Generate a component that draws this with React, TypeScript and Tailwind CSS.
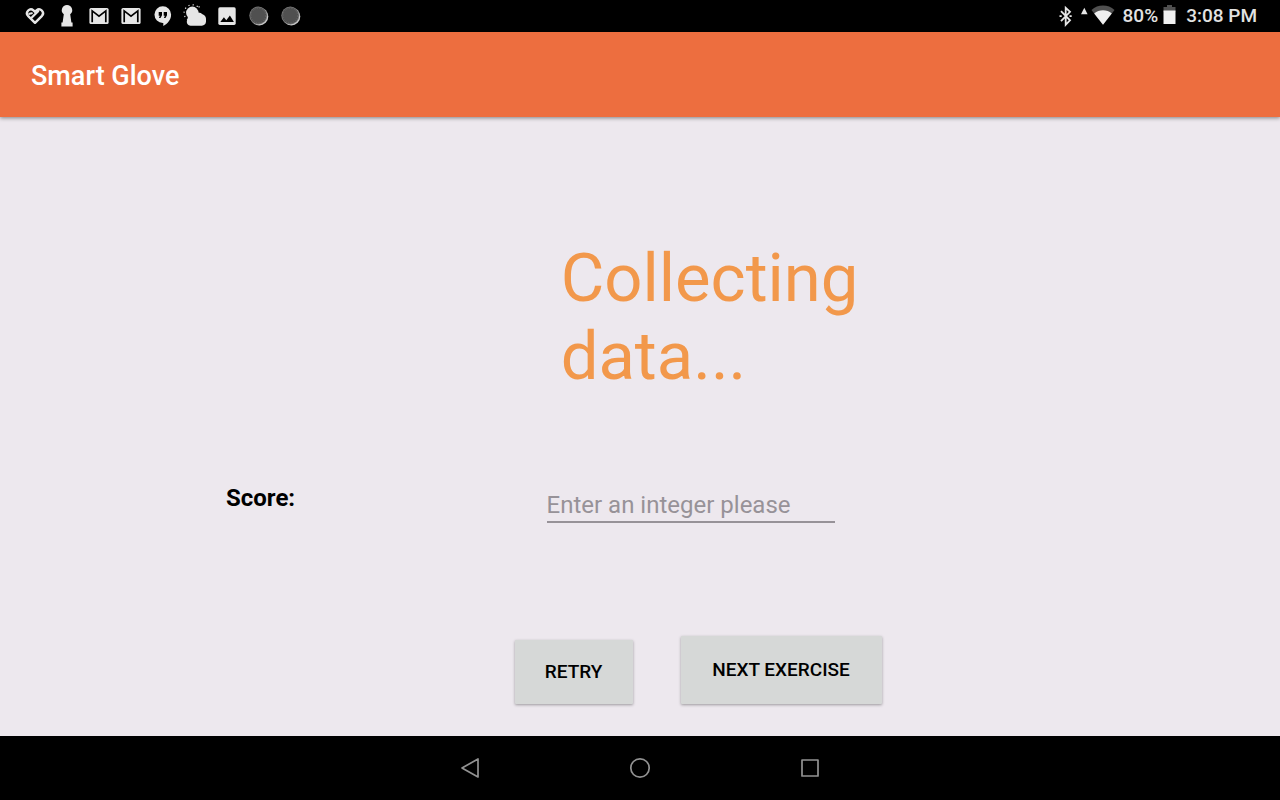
import type { ReactNode } from "react";

function StatusIcon({ label, children }: { label: string; children: ReactNode }) {
  return (
    <svg className="h-8 w-8" viewBox="0 0 32 32" fill="#e6e6e6" role="img" aria-label={label}>
      {children}
    </svg>
  );
}

function Mail() {
  return (
    <StatusIcon label="New mail">
      <rect x="6.400" y="8" width="19.200" height="16" rx="1.600" />
      <path d="M9.200 22.200V10.900L16 16.200l6.800-5.300v11.300" fill="none" stroke="#000" strokeWidth="1.700" />
    </StatusIcon>
  );
}

function Disc() {
  return (
    <StatusIcon label="Recording">
      <circle cx="16.300" cy="16.500" r="9" fill="#c8c8c8" />
      <circle cx="15.300" cy="15.500" r="9" fill="#757575" />
      <circle cx="15.300" cy="15.500" r="8" fill="#484848" />
      <circle cx="15.300" cy="15.500" r="7.300" fill="#505050" stroke="#666" strokeWidth="1" strokeDasharray="1.500 1" />
    </StatusIcon>
  );
}

function StatusBar() {
  return (
    <div className="flex h-8 items-center justify-between bg-black pr-[23px] pl-[19px] text-[#e2e2e2]">
      <div className="flex">
        <StatusIcon label="Health">
          <path d="M16 22.800l-7-7a3.900 3.900 0 0 1 5.500-5.500l1.500 1.500 1.500-1.500a3.900 3.900 0 0 1 5.500 5.500z" fill="none" stroke="#e6e6e6" strokeWidth="2.400" strokeLinejoin="round" />
          <path d="M12.800 17.500l6.400-6.400M10.500 13.800l2.300-.5" fill="none" stroke="#e6e6e6" strokeWidth="2.200" strokeLinecap="round" />
        </StatusIcon>
        <StatusIcon label="Keyhole">
          <path d="M16 5a5.200 5.200 0 0 1 3.200 9.300l1.200 8.200h1.200V26.500H10.400v-4h1.200l1.200-8.200A5.200 5.200 0 0 1 16 5z" />
        </StatusIcon>
        <Mail />
        <Mail />
        <StatusIcon label="Messages">
          <path d="M15.800 6.200a8.300 8.300 0 0 1 8.300 8.300c0 5.200-3.400 9.200-7.800 11.400v-3h-.5a8.350 8.350 0 0 1 0-16.700z" />
          <path d="M11.700 12h3.300v3.300L13.500 18h-1.600l1-2.300h-1.200zM16.700 12H20v3.300L18.500 18h-1.600l1-2.300h-1.200z" fill="#000" />
        </StatusIcon>
        <StatusIcon label="Weather">
          <circle cx="13.300" cy="13" r="8.200" fill="none" stroke="#e6e6e6" strokeWidth="1.200" strokeDasharray="1.200 3.100" />
          <rect x="16" y="7" width="10" height="6" fill="#000" />
          <circle cx="13.300" cy="12.800" r="6.200" />
          <path d="M11.500 25.700a4.200 4.200 0 0 1-3.700-4.400l1.500-5.500 5.700-.5 3.500-2.800a5.500 5.500 0 0 1 5 1.800 5 5 0 0 1 3.500 4.500v3a4.500 4.500 0 0 1-4.200 3.900z" />
          <path d="M19.500 6.200h1.200v1.200h-1.200z" />
        </StatusIcon>
        <StatusIcon label="Picture">
          <rect x="7.300" y="7.300" width="17.400" height="17.600" rx="1.600" />
          <path d="M9.300 22l3.600-4.800 2.400 3 3.600-4.700 4 6.500z" fill="#000" />
        </StatusIcon>
        <Disc />
        <Disc />
      </div>
      <div className="flex items-center text-[19px] leading-8 font-medium">
        <svg className="h-8 w-4" viewBox="0 0 16 32" role="img" aria-label="Bluetooth">
          <path d="M2 11.200l9 9.100-4.300 4.400V7.900l4.300 4L2 21.200" fill="none" stroke="#e6e6e6" strokeWidth="1.800" />
          <path d="M.5 16.200h2.200M10.500 16.200h2.200" stroke="#e6e6e6" strokeWidth="1.800" />
        </svg>
        <svg className="mr-2 ml-1 h-8 w-9" viewBox="0 0 36 32" role="img" aria-label="Wi-Fi">
          <path d="M2 14.200l3.300-6.400 3.300 6.400z" fill="#e6e6e6" />
          <path d="M12.500 9.900a17.500 17.500 0 0 1 23 0L24 24.800z" fill="#505050" />
          <path d="M15.200 13.400a13.600 13.600 0 0 1 17.600 0L24 24.800z" fill="#f0f0f0" />
        </svg>
        <span>80%</span>
        <svg className="mx-1 h-8 w-4" viewBox="0 0 16 32" role="img" aria-label="Battery">
          <path d="M5 5h5v2h3.500v5h-12V7H5z" fill="#505050" />
          <path d="M1.500 10.500h12V24h-12z" fill="#f0f0f0" />
        </svg>
        <span className="ml-1">3:08 PM</span>
      </div>
    </div>
  );
}

function NavigationBar() {
  return (
    <nav className="flex h-16 items-center justify-center gap-[130px] bg-black">
      <button type="button" aria-label="Back" className="h-10 w-10">
        <svg className="h-10 w-10" viewBox="0 0 40 40" fill="none" stroke="#929292" strokeWidth="1.700" strokeLinejoin="round">
          <path d="M28 11v18L12 20z" />
        </svg>
      </button>
      <button type="button" aria-label="Home" className="h-10 w-10">
        <svg className="h-10 w-10" viewBox="0 0 40 40" fill="none" stroke="#929292" strokeWidth="1.700">
          <circle cx="20" cy="20" r="9.200" />
        </svg>
      </button>
      <button type="button" aria-label="Overview" className="h-10 w-10">
        <svg className="h-10 w-10" viewBox="0 0 40 40" fill="none" stroke="#929292" strokeWidth="1.700" strokeLinejoin="round">
          <path d="M12 12h16v16H12z" />
        </svg>
      </button>
    </nav>
  );
}

export default function App() {
  return (
    <div className="flex min-h-screen flex-col bg-[#ede8ee] font-['Roboto',sans-serif]">
      <StatusBar />
      <header className="flex h-[85px] items-center bg-[#ed6e3f] px-[31px] pt-0.5 shadow-[0_1px_4px_rgba(0,0,0,0.45)]">
        <h1 className="text-[27px] leading-8 font-medium text-white">Smart Glove</h1>
      </header>
      <main className="flex flex-1 flex-col justify-end pb-8">
        <p className="ml-[43.8%] w-80 text-[67px] leading-[78px] text-[#f2984b]">Collecting data...</p>
        <div className="mt-[89px] flex items-start">
          <label htmlFor="score" className="w-[42.7%] pl-[226px] text-2xl leading-7 font-bold text-black">
            Score:
          </label>
          <input
            id="score"
            type="text"
            inputMode="numeric"
            placeholder="Enter an integer please"
            className="h-[39px] w-72 border-b-2 border-[#979298] bg-transparent pt-1 text-2xl text-black outline-none placeholder:text-[#979298]"
          />
        </div>
        <div className="mt-[113px] ml-[40.2%] flex items-end gap-12 text-[19px] font-medium text-black">
          <button type="button" className="h-16 w-[118px] rounded-[1px] bg-[#d6d8d7] shadow-[0_1px_3px_rgba(0,0,0,0.35)]">
            RETRY
          </button>
          <button type="button" className="h-[68px] w-[201px] rounded-[1px] bg-[#d6d8d7] shadow-[0_1px_3px_rgba(0,0,0,0.35)]">
            NEXT EXERCISE
          </button>
        </div>
      </main>
      <NavigationBar />
    </div>
  );
}
